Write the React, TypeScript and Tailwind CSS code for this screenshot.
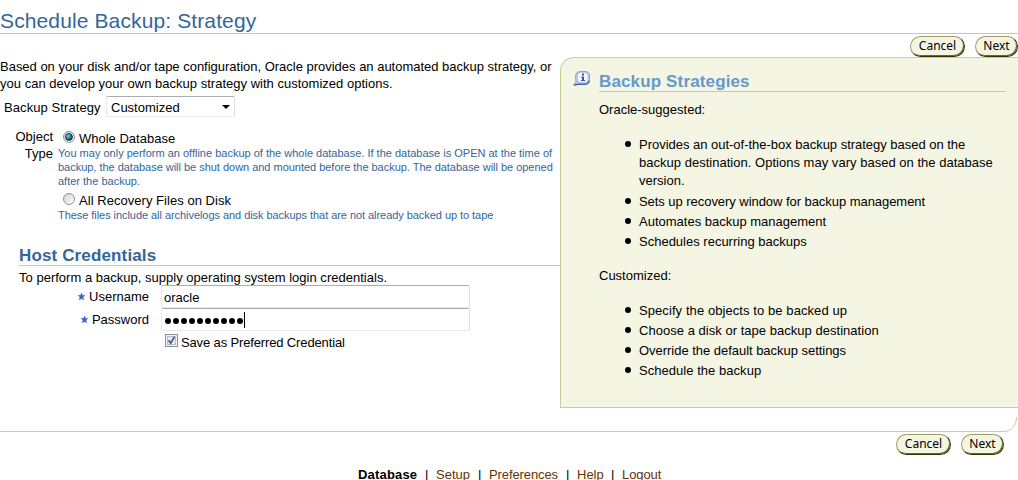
import React from "react";

function PillButton({ label, width }: { label: string; width: string }) {
  return (
    <button
      className={`h-[21px] ${width} rounded-full border border-t-[#9c9c62] border-l-[#9c9c62] border-r-[#333300] border-b-[#333300] bg-[#f5f5e4] p-0 pb-px text-center font-['Noto_Sans','DejaVu_Sans',sans-serif] text-[12px] leading-[18px] text-black shadow-[inset_-1px_-1px_0_#666633]`}
    >
      {label}
    </button>
  );
}

type Line = { text: string; tracking?: string };

function Bullets({ items }: { items: Line[][] }) {
  return (
    <ul className="pl-[26px]">
      {items.map((lines) => (
        <li key={lines[0].text} className="flex pb-[2px]">
          <span className="mt-[5px] mr-[8px] h-[6px] w-[6px] shrink-0 rounded-full bg-black" />
          <span className="leading-[18px] whitespace-nowrap">
            {lines.map((line) => (
              <span key={line.text} className={`block ${line.tracking ?? ""}`}>{line.text}</span>
            ))}
          </span>
        </li>
      ))}
    </ul>
  );
}

const SUGGESTED: Line[][] = [
  [
    { text: "Provides an out-of-the-box backup strategy based on the", tracking: "tracking-[-0.02px]" },
    { text: "backup destination. Options may vary based on the database", tracking: "tracking-[0.02px]" },
    { text: "version." },
  ],
];

const SUGGESTED_REST: Line[][] = [
  [{ text: "Sets up recovery window for backup management", tracking: "tracking-[-0.05px]" }],
  [{ text: "Automates backup management" }],
  [{ text: "Schedules recurring backups" }],
];

const CUSTOMIZED: Line[][] = [
  [{ text: "Specify the objects to be backed up", tracking: "tracking-[0.08px]" }],
  [{ text: "Choose a disk or tape backup destination", tracking: "tracking-[0.03px]" }],
  [{ text: "Override the default backup settings", tracking: "tracking-[-0.03px]" }],
  [{ text: "Schedule the backup", tracking: "tracking-[0.04px]" }],
];

function InfoIcon() {
  return (
    <svg className="mt-[12px] ml-[12px] h-[17px] w-[18px] shrink-0" viewBox="0 0 18 17">
      <path d="M7.500 1.500h4.500C15.500 1.500 16.500 3.500 16.500 6v3.500c0 2.500-1.500 4.500-4.500 4.500H5.500L.800 15l2.200-3.500C2.500 10.500 2.500 9 2.500 6.500 2.500 3.500 4 1.500 7.500 1.500Z" fill="#b6c6e4" stroke="#8ba3d0" />
      <path d="M8 3h3.500Q14.500 3 14.500 6v3q0 3-3 3H8Q5 12 5 9V6Q5 3 8 3Z" fill="#f4f7fd" />
      <path d="M.800 15.200l4.200-.900h7.500q3-.500 4-3.500" fill="none" stroke="#47649b" strokeWidth="1.200" />
      <path d="M9 3.500h2v2H9zM8 6.500h3V10h1v1H8v-1h1V7.500H8z" fill="#3a55a5" />
    </svg>
  );
}

function Radio({ checked }: { checked?: boolean }) {
  return (
    <span className="flex h-[12px] w-[12px] items-center justify-center rounded-full border border-[#8e8f8f] bg-linear-to-br from-[#d2d2d2] to-white">
      {checked && <span className="h-[8px] w-[8px] rounded-full border border-[#173a55] bg-radial-[at_35%_30%] from-[#7cd3f0] to-[#0a4a78] to-70%" />}
    </span>
  );
}

function CredentialRow({ label, children }: { label: string; children: React.ReactNode }) {
  return (
    <div className="flex h-[23px]">
      <div className="flex w-[149px] justify-end leading-[23px]">
        <svg className="mt-[8px] mr-[4px] h-[7px] w-[7px]" viewBox="0 0 7 7">
          <path d="M3.500 0l.9 2.200 2.600.2-2 1.600.8 3-2.300-1.600L1.200 7l.8-3-2-1.600 2.600-.2z" fill="#3366cc" stroke="#3366cc" strokeWidth="0.400" />
        </svg>
        {label}
      </div>
      <div className="ml-[12px] flex h-[23px] w-[309px] items-center rounded-[2px] border border-[#e3e9ef] border-t-[#abadb3] border-r-[#dbdfe6] pl-[2px] leading-[22px]">
        {children}
      </div>
    </div>
  );
}

function LeftColumn() {
  return (
    <main className="w-[560px] shrink-0 whitespace-nowrap">
      <p className="pt-[1px] leading-[17px]">
        <span className="block tracking-[-0.012px]">Based on your disk and/or tape configuration, Oracle provides an automated backup strategy, or</span>
        <span className="block tracking-[0.015px]">you can develop your own backup strategy with customized options.</span>
      </p>
      <div className="mt-[4px] flex h-[21px]">
        <span className="w-[102px] pl-[4px] leading-[23px] tracking-[0.08px]">Backup Strategy</span>
        <div className="ml-[4px] flex h-[21px] w-[129px] items-center justify-between rounded-[2px] border border-[#e3e9ef] border-t-[#abadb3] border-r-[#dbdfe6] pr-[4px] pl-[4px]">
          <span className="pt-[2px]">Customized</span>
          <svg className="h-[4px] w-[8px]" viewBox="0 0 8 4"><path d="M0 0h8L4 4z" /></svg>
        </div>
      </div>
      <section className="mt-[11px] flex">
        <div className="w-[53px] text-right leading-[17px]">Object<br />Type</div>
        <div className="pl-[5px]">
          <div className="flex h-[18px] items-start">
            <span className="mt-[3px] mr-[4px] ml-[5px]"><Radio checked /></span>
            <span className="mt-[2px] leading-[17px]">Whole Database</span>
          </div>
          <p className="text-[11px] leading-[14px] text-[#336699]">
            <span className="block">You may only perform an offline backup of the whole database. If the database is OPEN at the time of</span>
            <span className="block tracking-[-0.023px]">backup, the database will be shut down and mounted before the backup. The database will be opened</span>
            <span className="block">after the backup.</span>
          </p>
          <div className="mt-[4px] flex h-[16px] items-start">
            <span className="mt-[1px] mr-[4px] ml-[5px]"><Radio /></span>
            <span className="leading-[17px] tracking-[0.04px]">All Recovery Files on Disk</span>
          </div>
          <p className="text-[11px] leading-[14px] tracking-[-0.055px] text-[#336699]">These files include all archivelogs and disk backups that are not already backed up to tape</p>
        </div>
      </section>
      <h2 className="mt-[23px] ml-[19px] h-[21px] border-b border-[#cccc99] pt-px text-[17px] leading-[20px] font-bold tracking-[0.14px] text-[#336699]">Host Credentials</h2>
      <p className="h-[19px] pl-[19px] leading-[23px] tracking-[0.015px]">To perform a backup, supply operating system login credentials.</p>
      <CredentialRow label="Username"><span className="pt-[2px]">oracle</span></CredentialRow>
      <CredentialRow label="Password">
        <span className="flex items-center gap-[2px] pl-[1px]">
          {Array.from({ length: 10 }, (_, i) => <span key={i} className="mt-[2px] h-[6px] w-[6px] rounded-full bg-black" />)}
        </span>
        <span className="ml-px h-[16px] w-px bg-black" />
      </CredentialRow>
      <div className="mt-[3px] flex pl-[165px]">
        <span className="flex h-[13px] w-[13px] items-center justify-center border border-[#8e8f8f] bg-[#e9ebee] shadow-[inset_0_0_0_1px_#f4f4f4,inset_0_0_0_2px_#b8bec6]">
          <svg className="h-[9px] w-[9px]" viewBox="0 0 9 9"><path d="M1.500 4.200l2.200 3L7.500 .8" fill="none" stroke="#4a5f97" strokeWidth="1.800" /></svg>
        </span>
        <span className="ml-[3px] leading-[18px] tracking-[-0.14px]">Save as Preferred Credential</span>
      </div>
    </main>
  );
}

export default function App() {
  return (
    <div className="h-[480px] w-[1018px] overflow-hidden bg-white font-['Liberation_Sans',Arial,sans-serif] text-[13px] text-black">
      <h1 className="h-[34px] border-b border-[#cccc99] pt-[8px] text-[21px] leading-[26px] tracking-[0.12px] text-[#336699]">Schedule Backup: Strategy</h1>
      <div className="flex h-[23px] justify-end gap-[10px] pt-[2px]">
        <PillButton label="Cancel" width="w-[55px]" />
        <PillButton label="Next" width="w-[43px]" />
      </div>
      <div className="flex h-[351px]">
        <LeftColumn />
        <aside className="flex h-[351px] w-[458px] rounded-tl-[14px] border-t border-b border-l border-[#cccc99] bg-[#f5f5e4]">
          <InfoIcon />
          <div className="ml-[8px] w-[407px]">
            <h2 className="h-[34px] border-b border-[#cccc99] pt-[14px] text-[17px] leading-[20px] font-bold tracking-[0.14px] text-[#6699cc]">Backup Strategies</h2>
            <p className="mt-[9px] mb-[17px] leading-[18px]">Oracle-suggested:</p>
            <Bullets items={SUGGESTED} />
            <div className="mt-px"><Bullets items={SUGGESTED_REST} /></div>
            <p className="mt-[14px] mb-[17px] leading-[18px]">Customized:</p>
            <Bullets items={CUSTOMIZED} />
          </div>
        </aside>
      </div>
      <div className="flex h-[24px] items-end">
        <span className="h-px w-[1004px] bg-[#cccc99]" />
        <svg className="h-[15px] w-[14px]" viewBox="0 0 14 15"><path d="M0 14.500C8 14.500 12.500 8 12.500 0" fill="none" stroke="#cccc99" /></svg>
      </div>
      <div className="flex h-[23px] justify-end gap-[10px] pt-[2px] pr-[14px]">
        <PillButton label="Cancel" width="w-[55px]" />
        <PillButton label="Next" width="w-[43px]" />
      </div>
      <nav className="mt-[11px] flex pl-[358px] leading-[18px] whitespace-nowrap text-[#663300]">
        <span className="w-[67px] font-bold tracking-[0.18px] text-black">Database</span>
        <span className="w-[11px] text-black">|</span>
        <span className="w-[42px]">Setup</span>
        <span className="w-[11px] text-black">|</span>
        <span className="w-[77px] tracking-[-0.1px]">Preferences</span>
        <span className="w-[11px] text-black">|</span>
        <span className="w-[34px]">Help</span>
        <span className="w-[11px] text-black">|</span>
        <span className="tracking-[-0.1px]">Logout</span>
      </nav>
    </div>
  );
}
